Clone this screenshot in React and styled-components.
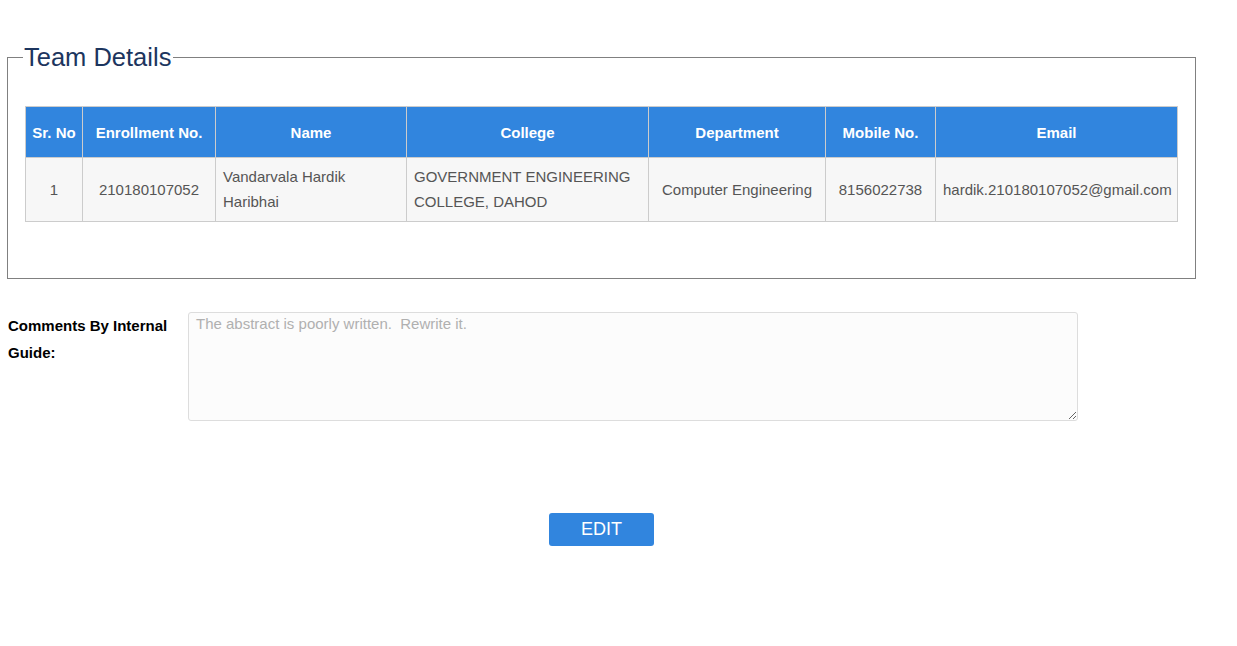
import React from "react";
import styled, { createGlobalStyle } from "styled-components";

const GlobalStyle = createGlobalStyle`
  body {
    margin: 0;
    font-family: "Liberation Sans", Arial, sans-serif;
    background: #fff;
  }
`;

const members = [
  {
    sr: 1,
    enrollment: "210180107052",
    name: "Vandarvala Hardik Haribhai",
    college: "GOVERNMENT ENGINEERING COLLEGE, DAHOD",
    department: "Computer Engineering",
    mobile: "8156022738",
    email: "hardik.210180107052@gmail.com",
  },
];

const columns = [
  { key: "sr", label: "Sr. No", width: 57 },
  { key: "enrollment", label: "Enrollment No.", width: 133 },
  { key: "name", label: "Name", width: 191, align: "left" },
  { key: "college", label: "College", width: 242, align: "left" },
  { key: "department", label: "Department", width: 177 },
  { key: "mobile", label: "Mobile No.", width: 110 },
  { key: "email", label: "Email", width: 242 },
];

const App = () => {
  return (
    <Page>
      <GlobalStyle />
      <TeamBox>
        <Legend>Team Details</Legend>
        <Table>
          <colgroup>
            {columns.map((c) => (
              <col key={c.key} style={{ width: c.width }} />
            ))}
          </colgroup>
          <thead>
            <tr>
              {columns.map((c) => (
                <Th key={c.key}>{c.label}</Th>
              ))}
            </tr>
          </thead>
          <tbody>
            {members.map((m) => (
              <tr key={m.sr}>
                {columns.map((c) => (
                  <Td key={c.key} $align={c.align}>
                    {m[c.key]}
                  </Td>
                ))}
              </tr>
            ))}
          </tbody>
        </Table>
      </TeamBox>

      <CommentRow>
        <Label>Comments By Internal Guide:</Label>
        <Comment placeholder="The abstract is poorly written.  Rewrite it." />
      </CommentRow>

      <Actions>
        <EditButton>EDIT</EditButton>
      </Actions>
    </Page>
  );
};

export default App;

const Page = styled.div`
  padding-top: 43px;
`;

const TeamBox = styled.fieldset`
  margin: 0 42px 0 7px;
  padding: 35px 17px 56px 17px;
  border: 1px solid #808080;
`;

const Legend = styled.legend`
  font-size: 25.5px;
  color: #1c355e;
  padding: 0 2px 0 1px;
  margin-left: -2px;
  line-height: 28px;
`;

const Table = styled.table`
  width: 100%;
  border-collapse: collapse;
  table-layout: fixed;
  font-size: 15px;
`;

const Th = styled.th`
  background: #3185de;
  color: #fff;
  font-weight: bold;
  height: 50px;
  padding: 0 6px;
  border: 1px solid #cccccc;
  text-align: center;
`;

const Td = styled.td`
  background: #f7f7f7;
  color: #555;
  border: 1px solid #cccccc;
  padding: 6px 7px 7px;
  line-height: 25px;
  text-align: ${(p) => p.$align || "center"};
  white-space: ${(p) => (p.$align ? "normal" : "nowrap")};
`;

const CommentRow = styled.div`
  display: flex;
  margin-top: 33px;
  padding-left: 8px;
`;

const Label = styled.div`
  width: 170px;
  margin-right: 10px;
  font-size: 15px;
  font-weight: bold;
  color: #000;
  line-height: 27px;
`;

const Comment = styled.textarea`
  width: 890px;
  height: 109px;
  box-sizing: border-box;
  background: #fcfcfc;
  border: 1px solid #dddddd;
  border-radius: 3px;
  padding: 2px 7px;
  font-family: "Liberation Sans", Arial, sans-serif;
  font-size: 15px;
  color: #555;
  resize: both;
  &::placeholder {
    color: #b0b0b0;
  }
`;

const Actions = styled.div`
  display: flex;
  padding-left: 549px;
  margin-top: 92px;
`;

const EditButton = styled.button`
  width: 105px;
  height: 33px;
  background: #3185de;
  color: #fff;
  border: none;
  border-radius: 3px;
  font-family: "Liberation Sans", Arial, sans-serif;
  font-size: 18px;
  cursor: pointer;
`;
